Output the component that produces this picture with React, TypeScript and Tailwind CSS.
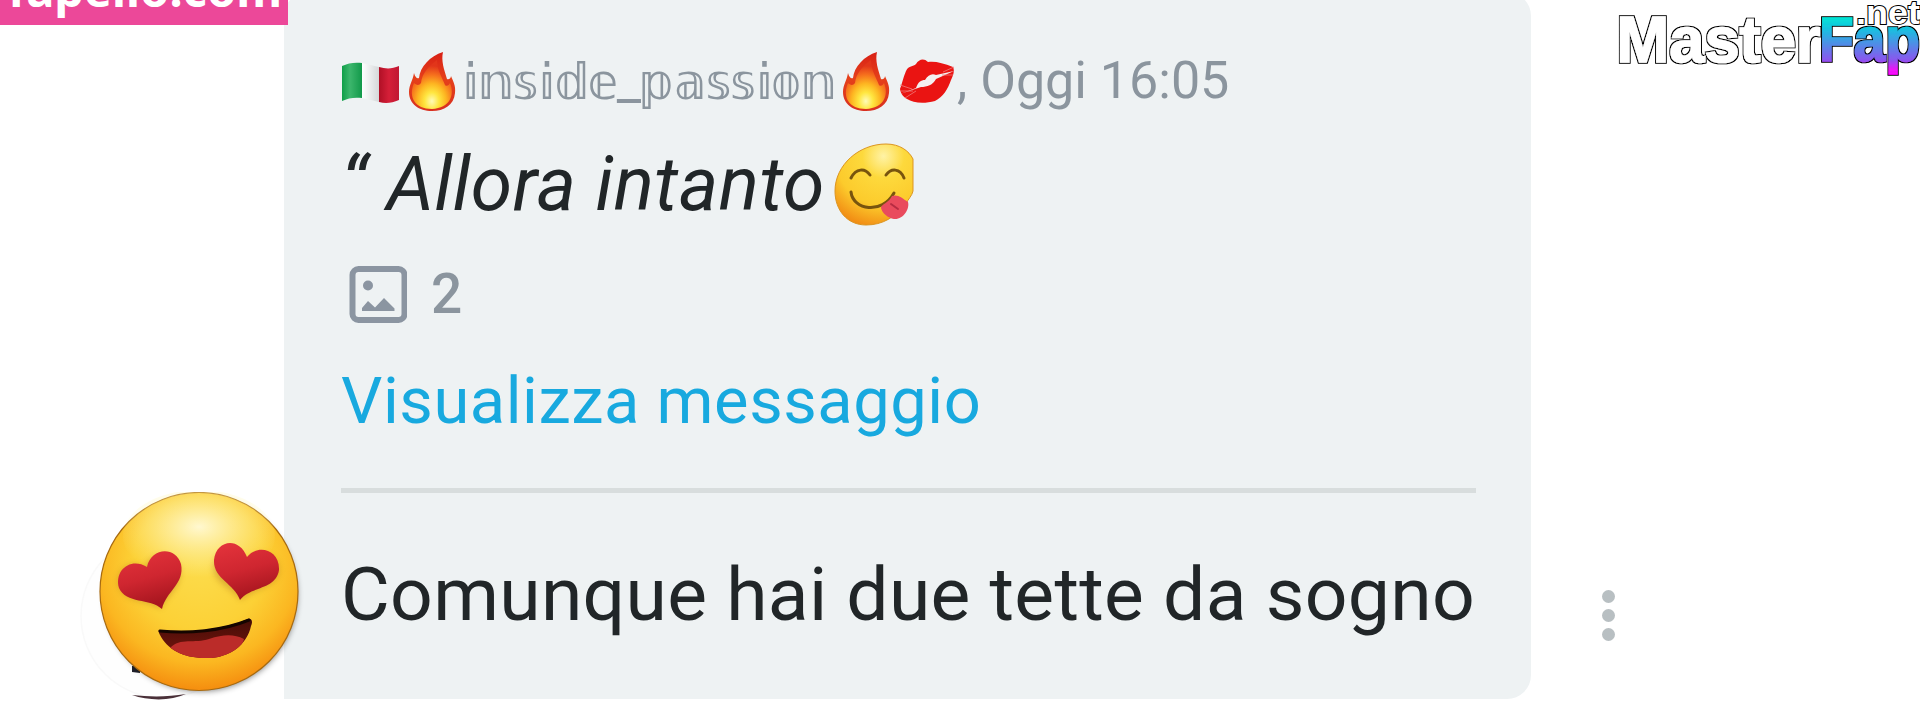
import React from "react";

function Flag() {
  return (
    <svg className="mt-1 h-[42px] w-[58px] shrink-0" viewBox="0 0 58 42">
      <defs>
        <linearGradient id="fg" x1="0" x2="1">
          <stop offset="0" stopColor="#0f9f48" />
          <stop offset="0.4" stopColor="#3cb66c" />
          <stop offset="1" stopColor="#12994a" />
        </linearGradient>
        <linearGradient id="fw" x1="0" x2="1">
          <stop offset="0" stopColor="#ffffff" />
          <stop offset="1" stopColor="#d5d8d9" />
        </linearGradient>
        <linearGradient id="fr" x1="0" x2="1">
          <stop offset="0" stopColor="#b01026" />
          <stop offset="0.5" stopColor="#d51f38" />
          <stop offset="1" stopColor="#c01832" />
        </linearGradient>
      </defs>
      <path d="M1 4C7 1 14 0 21 1V36C14 35 7 36 1 39Z" fill="url(#fg)" />
      <path d="M21 1C27 2 32 4 38 5V40C32 39 27 37 21 36Z" fill="url(#fw)" />
      <path d="M38 5C45 7 51 7 58 4V38C51 41 45 42 38 40Z" fill="url(#fr)" />
    </svg>
  );
}

function Flame() {
  return (
    <svg className="mt-0.5 h-[60px] w-[48px] shrink-0" viewBox="0 0 48 60">
      <defs>
        <linearGradient id="flo" x1="0" y1="0" x2="0" y2="1">
          <stop offset="0" stopColor="#d82015" />
          <stop offset="0.45" stopColor="#e5401a" />
          <stop offset="1" stopColor="#d83020" />
        </linearGradient>
        <radialGradient id="fli" cx="0.5" cy="0.84" r="0.72">
          <stop offset="0" stopColor="#fffbb8" />
          <stop offset="0.25" stopColor="#ffe640" />
          <stop offset="0.5" stopColor="#fdb521" />
          <stop offset="0.75" stopColor="#f6701d" />
          <stop offset="1" stopColor="#e2351a" />
        </radialGradient>
      </defs>
      <path
        d="M35 0C33 9 36 17 39 27C41 28 43 26 43 24C45 29 48 34 47 41C46 53 36 59 24 59C11 59 1 52 1 40C1 33 5 28 6 21C7 25 9 27 11 26C12 15 22 4 35 0Z"
        fill="url(#flo)"
      />
      <path
        d="M29 8C29 18 34 25 37 33C39 35 41 33 42 31C47 43 42 56 24 57C7 57 0 45 6 31C8 33 11 34 13 31C14 21 21 14 29 8Z"
        fill="url(#fli)"
      />
    </svg>
  );
}

function Lips() {
  return (
    <svg className="h-[46px] w-[56px] shrink-0" viewBox="0 0 56 46">
      <path
        d="M1 31C3 26 4 20 7 13C10 7 14 9 17 6C20 1 25 0 29 4C36 3 44 5 54 9C56 13 54 18 52 22C49 31 44 39 36 43C25 46 14 45 8 41C5 39 2 37 1 31Z"
        fill="#ea1412"
      />
      <path d="M17 30C19 24 22 22 26 22C29 17 33 15 37 17L55 13L37 21C34 27 28 29 22 29L1 36Z" fill="#f4f0f0" />
      <path d="M1 27L13 31M2 33L14 33M6 40L17 33M55 9L44 14M54 17L43 17" stroke="#f07a78" strokeWidth="0.8" />
    </svg>
  );
}

function Yum() {
  return (
    <svg className="mt-0.5 h-[84px] w-[80px] shrink-0" viewBox="0 0 80 84">
      <defs>
        <radialGradient id="yg" cx="0.62" cy="0.15" r="0.9">
          <stop offset="0" stopColor="#fff3a6" />
          <stop offset="0.3" stopColor="#fdd93c" />
          <stop offset="0.68" stopColor="#fccb2c" />
          <stop offset="1" stopColor="#f18b13" />
        </radialGradient>
      </defs>
      <path
        d="M52 1C66 1 75 8 79 16V48C78 53 74 56 72 61C61 74 49 82 32 82C13 82 1 67 1 48C1 22 25 1 52 1Z"
        fill="url(#yg)"
        stroke="#dc9520"
        strokeWidth="1"
      />
      <g fill="none" stroke="#78540e" strokeWidth="3" strokeLinecap="round">
        <path d="M17 35C22 25 31 25 36 32" />
        <path d="M52 32C57 25 66 25 70 35" />
        <path d="M17 49C19 67 48 72 60 50" />
      </g>
      <path d="M47 65C47 61 55 60 58 53C64 51 68 55 74 59C76 66 69 77 60 76C54 75 48 70 47 65Z" fill="#e94b5d" />
      <path d="M57 61L64 66" stroke="#b62c42" strokeWidth="2" strokeLinecap="round" />
    </svg>
  );
}

function HeartEyes() {
  return (
    <svg className="h-[220px] w-[240px]" viewBox="0 0 240 220">
      <defs>
        <radialGradient id="hf" cx="0.5" cy="0.36" r="0.66">
          <stop offset="0" stopColor="#fcdc4c" />
          <stop offset="0.5" stopColor="#fcd136" />
          <stop offset="0.76" stopColor="#fbb721" />
          <stop offset="1" stopColor="#f4870c" />
        </radialGradient>
        <radialGradient id="hh" cx="0.5" cy="0.4" r="0.55">
          <stop offset="0" stopColor="#fff8d0" />
          <stop offset="1" stopColor="#fff3a0" stopOpacity="0" />
        </radialGradient>
        <linearGradient id="hr" x1="0" y1="0" x2="0.3" y2="1">
          <stop offset="0" stopColor="#e5343c" />
          <stop offset="0.55" stopColor="#cf2630" />
          <stop offset="1" stopColor="#a8161f" />
        </linearGradient>
        <linearGradient id="hm" x1="0" y1="0" x2="0" y2="1">
          <stop offset="0" stopColor="#380b04" />
          <stop offset="1" stopColor="#821710" />
        </linearGradient>
        <clipPath id="hc">
          <path d="M80 130C108 133 142 130 168 119C172 118 173 122 171 126C167 145 149 159 125 158C103 158 87 149 80 135C78 131 78 130 80 130Z" />
        </clipPath>
        <filter id="hs" x="-20%" y="-20%" width="140%" height="140%">
          <feGaussianBlur stdDeviation="3" />
        </filter>
      </defs>
      <circle cx="83" cy="124" r="82" fill="#fefefe" stroke="#f9f9f9" strokeWidth="1.5" />
      <path d="M52 174H60V181L52 180Z" fill="#20202a" />
      <path d="M52 203C70 205 88 205 106 202C91 209 69 209 52 203Z" fill="#4a3038" />
      <g transform="translate(0 8)">
        <circle cx="121" cy="95" r="96" fill="#000000" opacity="0.5" filter="url(#hs)" />
        <circle cx="119" cy="91.500" r="99" fill="url(#hf)" stroke="#a76a10" strokeWidth="1.200" />
        <ellipse cx="119" cy="36" rx="76" ry="46" fill="url(#hh)" />
        <path d="M81 108C66 100 46 101 40 88C34 72 50 57 65 69C70 52 92 51 99 68C103 86 86 95 81 108Z" fill="#9d5a16" opacity="0.4" filter="url(#hs)" />
        <path d="M161 100C174 88 196 88 199 71C199 52 176 48 166 62C157 44 136 51 134 66C132 82 151 87 161 100Z" fill="#9d5a16" opacity="0.35" filter="url(#hs)" />
        <path d="M82 109C70 98 46 104 39 88C34 70 51 57 67 67C71 47 96 46 101 64C105 84 86 91 82 109Z" fill="url(#hr)" />
        <path d="M160 100C171 86 196 90 199 70C200 49 177 44 167 57C159 36 136 40 134 60C133 79 154 83 160 100Z" fill="url(#hr)" />
        <g clipPath="url(#hc)">
          <rect x="70" y="110" width="110" height="55" fill="url(#hm)" />
          <path d="M90 148C100 137 115 144 129 139C144 134 154 134 164 139L157 162H98Z" fill="#bb2c29" />
        </g>
        <path d="M80 131C108 134 142 131 169 120" fill="none" stroke="#140500" strokeWidth="3" strokeLinecap="round" />
      </g>
    </svg>
  );
}

function PhotoIcon() {
  return (
    <svg className="h-[58px] w-[58px] shrink-0" viewBox="0 0 58 58">
      <rect x="3.500" y="4" width="52" height="51" rx="6" fill="none" stroke="#8b95a1" strokeWidth="6" />
      <circle cx="19" cy="20.500" r="5" fill="#8b95a1" />
      <path d="M13 46V43L19 36L26 42.500L35 33L45.500 43.500V46Z" fill="#8b95a1" />
    </svg>
  );
}

function BrandMark() {
  return (
    <svg
      className="absolute right-0 top-0 h-[90px] w-[320px]"
      viewBox="0 0 320 90"
      fontFamily="'Liberation Sans', Arial, sans-serif"
      fontWeight="700"
      strokeLinejoin="miter"
    >
      <defs>
        <linearGradient id="bg" gradientUnits="userSpaceOnUse" x1="0" y1="17" x2="0" y2="77">
          <stop offset="0" stopColor="#00e5d4" />
          <stop offset="0.22" stopColor="#1cbde0" />
          <stop offset="0.72" stopColor="#8b55ee" />
          <stop offset="0.88" stopColor="#ef14f7" />
          <stop offset="1" stopColor="#ff00ff" />
        </linearGradient>
        <filter id="outline" x="-5%" y="-10%" width="110%" height="120%">
          <feMorphology in="SourceAlpha" operator="dilate" radius="1" result="wide" />
          <feMerge>
            <feMergeNode in="wide" />
            <feMergeNode in="SourceGraphic" />
          </feMerge>
        </filter>
      </defs>
      <text x="16.500" y="61.500" fontSize="65" textLength="204" lengthAdjust="spacingAndGlyphs" fill="#fff" stroke="#fff" strokeWidth="1.600" filter="url(#outline)">
        Master
      </text>
      <text x="219" y="61" fontSize="63" textLength="101" lengthAdjust="spacingAndGlyphs" fill="url(#bg)" stroke="url(#bg)" strokeWidth="1.600" filter="url(#outline)">
        Fap
      </text>
      <text x="256" y="24" fontSize="34" textLength="64" lengthAdjust="spacingAndGlyphs" fill="#fff" stroke="#000" strokeWidth="2" paintOrder="stroke">
        .net
      </text>
    </svg>
  );
}

export default function App() {
  return (
    <div className="relative h-[720px] w-[1920px] overflow-hidden bg-white font-['Roboto',sans-serif]">
      <div className="flex h-full items-start">
        <div className="-mt-2 ml-[284px] flex h-[707px] w-[1247px] shrink-0 flex-col rounded-t-3xl rounded-br-3xl bg-[#eef2f3] pl-[57px] pr-[55px] pt-12">
          <div className="flex h-[82px] items-center whitespace-nowrap text-[52px] leading-[84px] text-[#8b959e]">
            <Flag />
            <span className="ml-[9px] flex">
              <Flame />
            </span>
            <span className="ml-[5px] w-[381px] font-['DejaVu_Sans',sans-serif] text-[50px] tracking-[-1.4px]">
              𝕚𝕟𝕤𝕚𝕕𝕖<span className="font-['Roboto',sans-serif] text-[54px]">_</span>𝕡𝕒𝕤𝕤𝕚𝕠𝕟
            </span>
            <Flame />
            <span className="ml-[9px] flex">
              <Lips />
            </span>
            <span className="ml-0.5">, Oggi 16:05</span>
          </div>
          <div className="flex h-[124px] items-center whitespace-nowrap text-[75px] leading-[124px] text-[#212628]">
            <span className="w-[493px] italic tracking-[0.5px]">“ Allora intanto</span>
            <Yum />
          </div>
          <div className="flex h-24 items-center pl-2 text-[55px] font-medium leading-[96px] text-[#8b959e]">
            <PhotoIcon />
            <span className="ml-6">2</span>
          </div>
          <a className="block h-[118px] whitespace-nowrap text-[65px] leading-[118px] tracking-[0.55px] text-[#18a9df]">
            Visualizza messaggio
          </a>
          <div className="mt-7 h-[5px] shrink-0 bg-[#d8dddd]" />
          <p className="h-[203px] whitespace-nowrap text-[75px] leading-[203px] tracking-[0.3px] text-[#212628]">
            Comunque hai due tette da sogno
          </p>
        </div>
        <div className="ml-[71px] mt-[590px] flex flex-col gap-[6px]">
          <span className="size-[13px] rounded-full bg-[#b8bfc2]" />
          <span className="size-[13px] rounded-full bg-[#b8bfc2]" />
          <span className="size-[13px] rounded-full bg-[#b8bfc2]" />
        </div>
      </div>
      <div className="absolute left-20 top-[492px]">
        <HeartEyes />
      </div>
      <div className="absolute left-0 top-0 h-[25px] w-[288px] bg-[#ec4899]">
        <span className="absolute bottom-[11px] left-[8px] whitespace-nowrap font-['Noto_Sans',sans-serif] text-[47px] font-bold leading-[50px] text-white">
          fapello.com
        </span>
      </div>
      <BrandMark />
    </div>
  );
}
